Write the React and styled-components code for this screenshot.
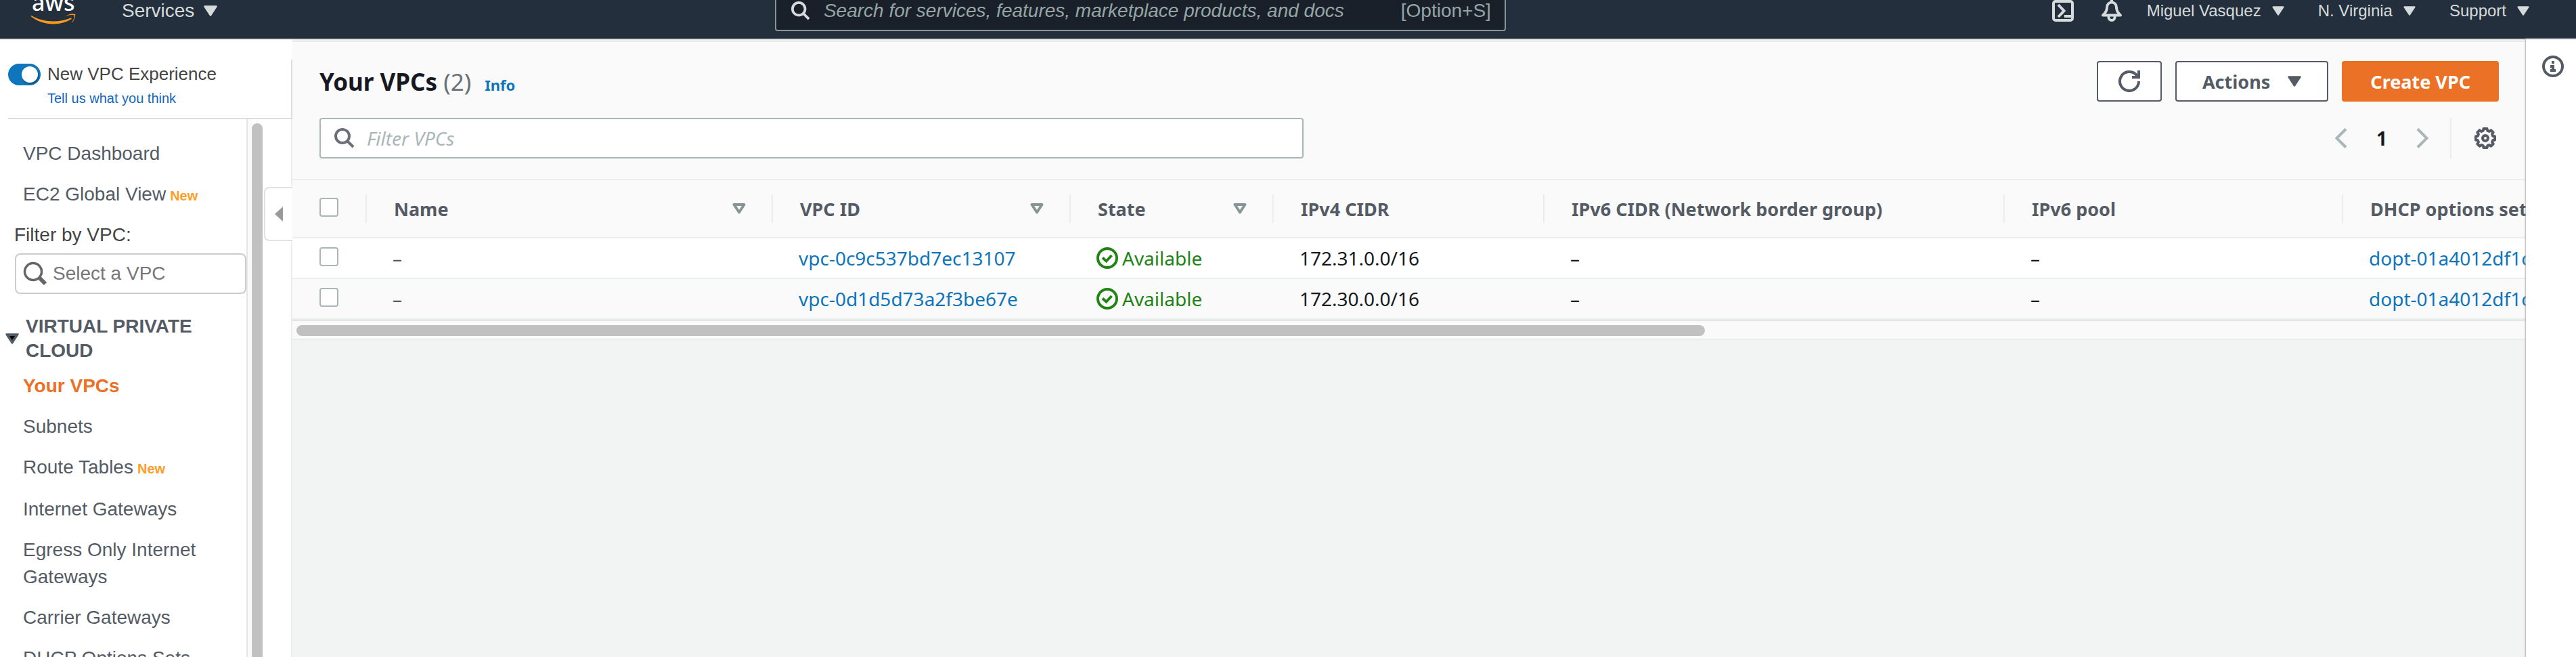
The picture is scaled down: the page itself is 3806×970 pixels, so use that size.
import React from "react";
import styled, { createGlobalStyle } from "styled-components";

const GlobalStyle = createGlobalStyle`
  *, *::before, *::after { box-sizing: border-box; }
  body { margin: 0; background: #f2f3f3; }
  button, input { font: inherit; margin: 0; }
  a { color: inherit; text-decoration: none; }
`;

const helvetica = `"Liberation Sans", Arial, sans-serif`;
const ember = `"Noto Sans", "Open Sans", sans-serif`;

const Shell = styled.div`
  display: flex;
  flex-direction: column;
  height: 100vh;
  overflow: hidden;
  font-family: ${ember};
  font-size: 28px;
  color: #16191f;
`;

/* ---------- top bar ---------- */

const TopBar = styled.header`
  flex: none;
  display: flex;
  align-items: flex-end;
  height: 58px;
  overflow: hidden;
  background: #242f3d;
  border-bottom: 2px solid #545b64;
  font-family: ${helvetica};
  color: #d5dbdb;
`;

const TopRow = styled.div`
  flex: 1;
  display: grid;
  grid-template-columns: minmax(0, 21fr) minmax(0, 1080px) minmax(0, 29fr);
  align-items: center;
  height: 80px;
`;

const TopLeft = styled.div`
  display: flex;
  align-items: center;
  gap: 66px;
  padding-left: 44px;
`;

const TopRight = styled.div`
  display: flex;
  align-items: center;
  justify-content: flex-end;
  gap: 40px;
  padding-right: 69px;
  font-size: 24px;
`;

const TopMenus = styled.div`
  display: flex;
  gap: 50px;
  margin-left: -4px;
`;

const TopButton = styled.button`
  display: flex;
  align-items: center;
  gap: ${(p) => p.$gap || 0}px;
  padding: 0;
  border: 0;
  background: none;
  color: inherit;
  line-height: 32px;
  white-space: nowrap;
`;

const LogoText = styled.text`
  font-family: ${ember};
  font-size: 34px;
  font-weight: 500;
  fill: #fff;
`;

const TopSearch = styled.label`
  display: flex;
  align-items: center;
  gap: 20px;
  height: 60px;
  padding: 0 20px 0 22px;
  border: 2px solid #879596;
  border-radius: 4px;
  background: #1a202a;
  color: #95a5a6;
`;

const TopSearchInput = styled.input`
  flex: 1;
  min-width: 0;
  padding: 0;
  border: 0;
  background: none;
  color: inherit;
  font-style: italic;
  &::placeholder { color: #95a5a6; opacity: 1; }
`;

/* ---------- body ---------- */

const Body = styled.div`
  flex: 1;
  min-height: 0;
  display: flex;
`;

const Side = styled.aside`
  position: relative;
  flex: none;
  display: flex;
  flex-direction: column;
  width: 432px;
  background: #fff;
  font-family: ${helvetica};
  color: #444;
`;

const SideHeader = styled.div`
  flex: none;
  display: grid;
  grid-template-columns: 48px 1fr;
  column-gap: 10px;
  row-gap: 7px;
  margin: 30px 0 0 12px;
  padding: 6px 0 17px;
  border-right: 2px solid #ddd;
  border-bottom: 2px solid #ddd;
`;

const Switch = styled.input`
  appearance: none;
  width: 48px;
  height: 32px;
  padding: 4px;
  border-radius: 16px;
  background: #0f75bd;
  &::before {
    content: "";
    display: block;
    width: 24px;
    height: 24px;
    margin-left: 16px;
    border-radius: 50%;
    background: #fff;
    box-shadow: 1px 2px 2px rgba(0, 0, 0, 0.35);
  }
`;

const SwitchLabel = styled.label`
  font-size: 26px;
  line-height: 30px;
`;

const FeedbackLink = styled.a`
  grid-column: 2;
  font-size: 20px;
  line-height: 24px;
  color: #1166bb;
`;

const SideBody = styled.div`
  flex: 1;
  min-height: 0;
  display: flex;
  border-right: 2px solid #eee;
`;

const Nav = styled.nav`
  flex: none;
  width: 366px;
  padding-top: 31px;
  overflow: hidden;
  border-right: 2px solid #e7e7e7;
`;

const NavScroll = styled.div`
  flex: none;
  width: 22px;
  padding: 6px 0 0 6px;
  background: linear-gradient(to right, #fafafa 6px, #fff 6px);
`;

const NavThumb = styled.div`
  width: 16px;
  height: 100%;
  border-radius: 8px 8px 0 0;
  background: #c1c1c1;
`;

const NavList = styled.ul`
  display: flex;
  flex-direction: column;
  gap: 20px;
  margin: 0;
  padding: 0 40px 0 34px;
  list-style: none;
  line-height: 40px;
  color: #545b64;
`;

const NavItem = styled.li`
  padding-bottom: ${(p) => (p.$isNew ? 2 : 0)}px;
`;

const NavLink = styled.a`
  color: ${(p) => (p.$active ? "#eb7126" : "inherit")};
  font-weight: ${(p) => (p.$active ? 700 : 400)};
`;

const NewBadge = styled.span`
  margin-left: 6px;
  font-size: 20px;
  font-weight: 700;
  line-height: 20px;
  color: #ff9d26;
`;

const FilterLabel = styled.label`
  display: block;
  margin: 18px 0 7px;
  padding-left: 21px;
  line-height: 40px;
`;

const FilterBox = styled.div`
  display: flex;
  align-items: center;
  gap: 8px;
  height: 60px;
  margin-left: 22px;
  padding-left: 10px;
  border: 2px solid #ccc;
  border-radius: 8px;
`;

const FilterInput = styled.input`
  flex: 1;
  min-width: 0;
  padding: 0;
  border: 0;
  background: none;
  &::placeholder { color: #777; opacity: 1; }
`;

const SectionToggle = styled.button`
  display: flex;
  align-items: center;
  gap: 10px;
  margin: 30px 0 14px;
  padding: 0 60px 0 8px;
  border: 0;
  background: none;
  text-align: left;
  font-weight: 700;
  line-height: 36px;
  color: #545b64;
  svg { flex: none; }
`;

const CollapseTab = styled.button`
  position: absolute;
  top: 218px;
  right: 0;
  display: flex;
  align-items: center;
  justify-content: center;
  width: 42px;
  height: 80px;
  padding: 0;
  border: 2px solid #e2e2e2;
  border-right: 0;
  border-radius: 8px 0 0 8px;
  background: #fff;
`;

const Main = styled.main`
  flex: 1;
  min-width: 0;
  padding-top: 2px;
  background: #f2f3f3;
`;

const Panel = styled.section`
  border-top: 2px solid #eaeded;
  border-bottom: 2px solid #eaeded;
  background: #fafafa;
`;

const PanelHeader = styled.div`
  display: flex;
  flex-direction: column;
  gap: 24px;
  padding: 28px 40px 30px;
`;

const PanelRow = styled.div`
  display: flex;
  align-items: center;
  justify-content: space-between;
  height: 60px;
`;

const FilterRow = styled.div`
  display: grid;
  grid-template-columns: minmax(0, 14fr) minmax(0, 17fr);
  height: 60px;
`;

const TitleGroup = styled.div`
  display: flex;
  align-items: baseline;
  gap: 20px;
  padding-top: 2px;
`;

const Title = styled.h1`
  margin: 0;
  font-size: 35px;
  font-weight: 700;
  line-height: 44px;
`;

const Count = styled.span`
  font-weight: 400;
  color: #687078;
`;

const InfoLink = styled.a`
  font-size: 22px;
  font-weight: 700;
  color: #0f75bb;
`;

const Actions = styled.div`
  display: flex;
  gap: 20px;
`;

const Button = styled.button`
  display: flex;
  align-items: center;
  justify-content: center;
  gap: 26px;
  height: 60px;
  padding: 0 ${(p) => (p.$icon ? 30 : p.$primary ? 40 : 38)}px;
  border: 2px solid ${(p) => (p.$primary ? "#eb7126" : "#545b64")};
  border-radius: 4px;
  background: ${(p) => (p.$primary ? "#eb7126" : "#fff")};
  color: ${(p) => (p.$primary ? "#fff" : "#545b64")};
  font-size: 27px;
  font-weight: 700;
  white-space: nowrap;
`;

const FilterVpcs = styled.label`
  display: flex;
  align-items: center;
  gap: 18px;
  padding: 0 20px;
  border: 2px solid #aab7b8;
  border-radius: 4px;
  background: #fff;
`;

const FilterVpcsInput = styled.input`
  flex: 1;
  min-width: 0;
  padding: 0;
  border: 0;
  background: none;
  font-style: italic;
  &::placeholder { color: #aab7b8; opacity: 1; }
`;

const Pager = styled.div`
  display: flex;
  align-items: center;
  justify-content: flex-end;
`;

const PagerButton = styled.button`
  display: flex;
  padding: 0;
  border: 0;
  background: none;
`;

const PageNumber = styled.button`
  padding: 0;
  width: 100px;
  border: 0;
  background: none;
  font-weight: 700;
  color: #16191f;
`;

const Settings = styled.div`
  display: flex;
  align-items: center;
  height: 60px;
  margin-left: 31px;
  padding: 0 4px 0 34px;
  border-left: 2px solid #eaeded;
`;

/* ---------- table ---------- */

const TableClip = styled.div`
  overflow: hidden;
  border-top: 2px solid #eaeded;
`;

const Table = styled.table`
  width: 5200px;
  table-layout: fixed;
  border-collapse: separate;
  border-spacing: 0;
`;

const Col = styled.col`
  width: ${(p) => p.$w};
`;

const Th = styled.th`
  height: 86px;
  padding: 0;
  border-bottom: 2px solid #eaeded;
  text-align: left;
  font-size: 27px;
  font-weight: 700;
  color: #545b64;
`;

const ThInner = styled.div`
  display: flex;
  align-items: center;
  justify-content: space-between;
  height: 42px;
  padding: 0 38px 0 40px;
  border-right: 2px solid #eaeded;
  white-space: nowrap;
`;

const Tr = styled.tr`
  background: ${(p) => (p.$alt ? "#fafafa" : "#fff")};
`;

const Td = styled.td`
  height: 60px;
  padding: 0 38px;
  border-bottom: 2px solid #eaeded;
  line-height: 44px;
  white-space: nowrap;
  color: ${(p) => (p.$muted ? "#545b64" : "inherit")};
`;

const CheckCell = styled(Td)`
  padding: 0 0 0 40px;
`;

const Checkbox = styled.input`
  && { margin-bottom: 4px; }
  appearance: none;
  display: block;
  width: 28px;
  height: 28px;
  border: 2px solid #aab7b8;
  border-radius: 4px;
  background: #fff;
`;

const CellLink = styled.a`
  color: #0f75bb;
`;

const Status = styled.span`
  display: flex;
  align-items: center;
  gap: 6px;
  color: #218314;
`;

const ScrollTrack = styled.div`
  height: 28px;
  padding: 6px;
  border-top: 2px solid #e4e6e6;
`;

const ScrollThumb = styled.div`
  width: 63.3%;
  height: 16px;
  border-radius: 8px;
  background: #c1c1c1;
`;

const Rail = styled.aside`
  position: relative;
  flex: none;
  width: 74px;
  padding: 24px 0 0 24px;
  background: #fff;
  box-shadow: 0 0 2px 1px #aab0b3;
`;

const RailButton = styled.button`
  display: flex;
  padding: 0;
  border: 0;
  background: none;
`;

/* ---------- icons ---------- */

const Caret = ({ width = 20, height = 16, color = "currentColor" }) => (
  <svg width={width} height={height} viewBox="0 0 20 16" aria-hidden="true">
    <path d="M1.500 1.500h17L10 14.500z" fill={color} stroke={color} strokeWidth="2.500" strokeLinejoin="round" />
  </svg>
);

const SectionCaret = () => (
  <svg width="20" height="16" viewBox="0 0 20 16" aria-hidden="true">
    <path d="M1.500 1.500h17L10 14.500z" fill="#545b64" stroke="#545b64" strokeWidth="2.500" strokeLinejoin="round" />
    <path d="M6 4h8l-4 6z" fill="#000" />
  </svg>
);

const SortIcon = () => (
  <svg width="20" height="16" viewBox="0 0 20 16" aria-hidden="true">
    <path d="M2.500 2h15L10 13.500z" fill="none" stroke="#879596" strokeWidth="4" strokeLinejoin="round" />
  </svg>
);

const SearchIcon = ({ color, size = 30 }) => (
  <svg width={size} height={size} viewBox="0 0 30 30" fill="none" stroke={color} strokeWidth="4" aria-hidden="true">
    <circle cx="12" cy="12" r="10" />
    <path d="M19 19l9 9" />
  </svg>
);

const BoldSearchIcon = () => (
  <svg width="36" height="36" viewBox="0 0 36 36" fill="none" stroke="#666" aria-hidden="true">
    <circle cx="15" cy="15" r="12.500" strokeWidth="3.500" />
    <path d="M24 24l9 9" strokeWidth="6" />
  </svg>
);

const AwsLogo = () => (
  <svg width="70" height="40" viewBox="0 0 70 40" overflow="visible" role="img" aria-label="AWS">
    <LogoText x="3" y="20">aws</LogoText>
    <path d="M1.500 28C11 35.500 22 39.500 35 39.500c10 0 19-2.800 26.500-7.500 1-.7 0-2-1.200-1.500C52 34 43.500 35.500 35 35.500 23 35.500 12 32.500 2.500 27.300c-1-.5-1.600.2-1 .7z" fill="#f8991d" />
    <path d="M53 28.500c4-2.500 8-3 12.500-2 .8 2-.5 7.500-4 11 2-.2 5.500-5.500 5.800-12.300C64 23.800 56 24.800 53 28.500z" fill="#f8991d" />
  </svg>
);

const ShellIcon = () => (
  <svg width="32" height="32" viewBox="0 0 32 32" fill="none" stroke="#d5dbdb" strokeWidth="4" aria-hidden="true">
    <rect x="2" y="2" width="28" height="28" rx="3" />
    <path d="M9 7l8.500 9L9 25" />
    <path d="M18 24h11" />
  </svg>
);

const BellIcon = () => (
  <svg width="32" height="32" viewBox="0 0 32 32" fill="none" stroke="#d5dbdb" strokeWidth="4" aria-hidden="true">
    <path d="M3 22.500C8 18 9 15 9 11c0-4.500 3-7.500 7-7.500S23 6.500 23 11c0 4 1 7 6 11.500z" strokeLinejoin="round" />
    <path d="M16 4V0" />
    <path d="M11.500 23v2.500c0 6 9 6 9 0V23" />
  </svg>
);

const RefreshIcon = () => (
  <svg width="32" height="32" viewBox="0 0 32 32" fill="none" stroke="#545b64" strokeWidth="4" aria-hidden="true">
    <path d="M30 16a14 14 0 1 1-4-9.800l3 3.800" />
    <path d="M30 0v10H20" />
  </svg>
);

const AngleIcon = ({ next }) => (
  <svg width="20" height="30" viewBox="0 0 20 30" fill="none" stroke="#aab7b8" strokeWidth="4" aria-hidden="true">
    <path d={next ? "M3 1.500L16.500 15 3 28.500" : "M17 1.500L3.500 15 17 28.500"} />
  </svg>
);

const GearIcon = () => (
  <svg width="32" height="32" viewBox="0 0 32 32" fill="none" stroke="#545b64" strokeWidth="4" aria-hidden="true">
    <path
      d="M13.500 2h5l.8 3 2.400 1 2.800-1.600 3.200 3.200L26.100 10.300l1 2.400 3 .8v5l-3 .8-1 2.400 1.600 2.800-3.200 3.200-2.800-1.600-2.400 1-.8 3h-5l-.8-3-2.400-1-2.800 1.600-3.200-3.200 1.600-2.800-1-2.400-3-.8v-5l3-.8 1-2.400L4.300 7.600l3.200-3.200L10.300 6l2.400-1z"
      strokeLinejoin="round"
    />
    <circle cx="16" cy="16" r="4" />
  </svg>
);

const InfoIcon = () => (
  <svg width="32" height="32" viewBox="0 0 32 32" aria-hidden="true">
    <circle cx="16" cy="16" r="14" fill="none" stroke="#545b64" strokeWidth="4" />
    <path d="M14 8h4v4h-4zM12 14h6v6h2v4h-8v-4h2v-2h-2z" fill="#545b64" />
  </svg>
);

const CheckIcon = () => (
  <svg width="32" height="32" viewBox="0 0 32 32" fill="none" stroke="#218314" strokeWidth="4" aria-hidden="true">
    <circle cx="16" cy="16" r="14" />
    <path d="M9 15.500l5.500 5L22.500 12" />
  </svg>
);

const CollapseIcon = () => (
  <svg width="12" height="24" viewBox="0 0 12 24" aria-hidden="true">
    <path d="M12 1v22L0 12z" fill="#999" />
  </svg>
);

/* ---------- data ---------- */

const topLinks = [
  { label: "VPC Dashboard" },
  { label: "EC2 Global View", isNew: true },
];

const vpcLinks = [
  { label: "Your VPCs", active: true },
  { label: "Subnets" },
  { label: "Route Tables", isNew: true },
  { label: "Internet Gateways" },
  { label: "Egress Only Internet Gateways" },
  { label: "Carrier Gateways" },
  { label: "DHCP Options Sets" },
];

const columns = [
  { label: "Name", width: "600px", sortable: true },
  { label: "VPC ID", width: "440px", sortable: true },
  { label: "State", width: "300px", sortable: true },
  { label: "IPv4 CIDR", width: "400px" },
  { label: "IPv6 CIDR (Network border group)", width: "680px" },
  { label: "IPv6 pool", width: "500px" },
  { label: "DHCP options set", width: "auto" },
];

const vpcs = [
  { id: "vpc-0c9c537bd7ec13107", cidr: "172.31.0.0/16", dhcp: "dopt-01a4012df1c" },
  { id: "vpc-0d1d5d73a2f3be67e", cidr: "172.30.0.0/16", dhcp: "dopt-01a4012df1c" },
];

const Links = ({ items }) => (
  <NavList>
    {items.map((item) => (
      <NavItem key={item.label} $isNew={item.isNew}>
        <NavLink href="#" $active={item.active}>{item.label}</NavLink>
        {item.isNew && <NewBadge>New</NewBadge>}
      </NavItem>
    ))}
  </NavList>
);

export default function App() {
  return (
    <Shell>
      <GlobalStyle />
      <TopBar>
        <TopRow>
          <TopLeft>
            <AwsLogo />
            <TopButton $gap={14}>Services <Caret /></TopButton>
          </TopLeft>
          <TopSearch>
            <SearchIcon color="#d5dbdb" size={28} />
            <TopSearchInput
              type="text"
              aria-label="Search"
              placeholder="Search for services, features, marketplace products, and docs"
            />
            <span>[Option+S]</span>
          </TopSearch>
          <TopRight>
            <TopButton aria-label="CloudShell"><ShellIcon /></TopButton>
            <TopButton aria-label="Notifications"><BellIcon /></TopButton>
            <TopMenus>
              {["Miguel Vasquez", "N. Virginia", "Support"].map((label) => (
                <TopButton key={label} $gap={16}>{label} <Caret width={18} height={14} /></TopButton>
              ))}
            </TopMenus>
          </TopRight>
        </TopRow>
      </TopBar>

      <Body>
        <Side>
          <SideHeader>
            <Switch id="new-experience" type="checkbox" role="switch" defaultChecked />
            <SwitchLabel htmlFor="new-experience">New VPC Experience</SwitchLabel>
            <FeedbackLink href="#">Tell us what you think</FeedbackLink>
          </SideHeader>
          <SideBody>
            <Nav>
              <Links items={topLinks} />
              <FilterLabel htmlFor="vpc-filter">Filter by VPC:</FilterLabel>
              <FilterBox>
                <BoldSearchIcon />
                <FilterInput id="vpc-filter" type="text" placeholder="Select a VPC" />
              </FilterBox>
              <SectionToggle aria-expanded="true">
                <SectionCaret />
                <span>VIRTUAL PRIVATE CLOUD</span>
              </SectionToggle>
              <Links items={vpcLinks} />
            </Nav>
            <NavScroll><NavThumb /></NavScroll>
          </SideBody>
          <CollapseTab aria-label="Collapse navigation"><CollapseIcon /></CollapseTab>
        </Side>

        <Main>
          <Panel>
            <PanelHeader>
              <PanelRow>
                <TitleGroup>
                  <Title>Your VPCs <Count>(2)</Count></Title>
                  <InfoLink href="#">Info</InfoLink>
                </TitleGroup>
                <Actions>
                  <Button $icon aria-label="Refresh"><RefreshIcon /></Button>
                  <Button>Actions <Caret /></Button>
                  <Button $primary>Create VPC</Button>
                </Actions>
              </PanelRow>
              <FilterRow>
                <FilterVpcs>
                  <SearchIcon color="#687078" />
                  <FilterVpcsInput type="text" aria-label="Filter VPCs" placeholder="Filter VPCs" />
                </FilterVpcs>
                <Pager>
                  <PagerButton aria-label="Previous page"><AngleIcon /></PagerButton>
                  <PageNumber>1</PageNumber>
                  <PagerButton aria-label="Next page"><AngleIcon next /></PagerButton>
                  <Settings>
                    <PagerButton aria-label="Preferences"><GearIcon /></PagerButton>
                  </Settings>
                </Pager>
              </FilterRow>
            </PanelHeader>
            <TableClip>
              <Table>
                <colgroup>
                  <Col $w="110px" />
                  {columns.map((c) => <Col key={c.label} $w={c.width} />)}
                </colgroup>
                <thead>
                  <tr>
                    <Th>
                      <ThInner><Checkbox type="checkbox" aria-label="Select all VPCs" /></ThInner>
                    </Th>
                    {columns.map((c) => (
                      <Th key={c.label} scope="col">
                        <ThInner>{c.label}{c.sortable && <SortIcon />}</ThInner>
                      </Th>
                    ))}
                  </tr>
                </thead>
                <tbody>
                  {vpcs.map((v, i) => (
                    <Tr key={v.id} $alt={i % 2 === 1}>
                      <CheckCell><Checkbox type="checkbox" aria-label={`Select ${v.id}`} /></CheckCell>
                      <Td $muted>–</Td>
                      <Td><CellLink href="#">{v.id}</CellLink></Td>
                      <Td><Status><CheckIcon />Available</Status></Td>
                      <Td>{v.cidr}</Td>
                      <Td>–</Td>
                      <Td>–</Td>
                      <Td><CellLink href="#">{v.dhcp}</CellLink></Td>
                    </Tr>
                  ))}
                </tbody>
              </Table>
            </TableClip>
            <ScrollTrack><ScrollThumb /></ScrollTrack>
          </Panel>
        </Main>

        <Rail>
          <RailButton aria-label="Open help panel"><InfoIcon /></RailButton>
        </Rail>
      </Body>
    </Shell>
  );
}
